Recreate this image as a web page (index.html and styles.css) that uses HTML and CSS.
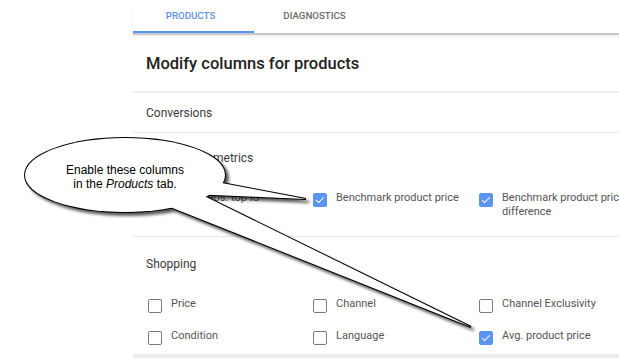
FILE: index.html
```html
<!DOCTYPE html>
<html lang="en">
<head>
    <meta charset="UTF-8">
    <title>Modify columns</title>
    <link rel="stylesheet" href="styles.css">
</head>
<body>

    <!-- Columns panel -->
    <div class="panel">
        <div class="tabs">
            <div class="tab active">Products</div>
            <div class="tab">Diagnostics</div>
        </div>

        <h1 class="title">Modify columns for products</h1>

        <div class="section collapsed">
            <p class="heading">Conversions</p>
        </div>

        <div class="section">
            <p class="heading">Competitive metrics</p>
            <div class="options">
                <label class="option"><span class="box"></span>Search abs. top IS</label>
                <label class="option"><span class="box checked"></span>Benchmark product price</label>
                <label class="option"><span class="box checked"></span>Benchmark product price difference</label>
            </div>
        </div>

        <div class="section last">
            <p class="heading">Shopping</p>
            <div class="options">
                <label class="option"><span class="box"></span>Price</label>
                <label class="option"><span class="box"></span>Channel</label>
                <label class="option"><span class="box"></span>Channel Exclusivity</label>
                <label class="option"><span class="box"></span>Condition</label>
                <label class="option"><span class="box"></span>Language</label>
                <label class="option"><span class="box checked"></span>Avg. product price</label>
            </div>
        </div>
    </div>

    <!-- Callout -->
    <svg class="callout" width="619" height="359" viewBox="0 0 619 359">
        <defs>
            <filter id="shadow" x="-10%" y="-10%" width="130%" height="140%">
                <feDropShadow dx="3" dy="3" stdDeviation="1.8" flood-color="#000" flood-opacity="0.65"/>
            </filter>
        </defs>
        <g filter="url(#shadow)">
            <g stroke="#000" stroke-width="2" fill="#fff">
                <ellipse cx="125" cy="175" rx="100" ry="37"/>
                <polygon points="306,199 190,177 190,194"/>
                <polygon points="471,327 160,203 192,190"/>
            </g>
            <g fill="#fff">
                <ellipse cx="125" cy="175" rx="100" ry="37"/>
                <polygon points="306,199 190,177 190,194"/>
                <polygon points="471,327 160,203 192,190"/>
            </g>
        </g>
    </svg>
    <div class="callout-text">Enable these columns<br>in the <i>Products</i> tab.</div>

</body>
</html>
```

FILE: styles.css
```css
/* Page */
body {
    margin: 0;
    width: 619px;
    height: 359px;
    overflow: hidden;
    position: relative;
    background: #fff;
    font-family: Roboto, "Liberation Sans", sans-serif;
}

.panel {
    margin-left: 133px;
    width: 640px;
}

/* Tabs */
.tabs {
    display: flex;
    height: 33px;
    border-bottom: 2px solid #c8c8c8;
    box-shadow: 0 2px 2px rgba(0, 0, 0, 0.06);
}

.tab {
    width: 121px;
    text-align: center;
    line-height: 31px;
    font-size: 9.7px;
    font-weight: 500;
    text-transform: uppercase;
    color: #6b6b6b;
}

.tab.active {
    color: #5b8ff0;
    box-shadow: inset 0 -2px 0 #5b8ff0;
    text-indent: -6px;
}

.title {
    margin: 0;
    height: 56px;
    line-height: 58px;
    padding-left: 13px;
    font-size: 16.5px;
    font-weight: 500;
    color: #222;
    border-bottom: 2px solid #efefef;
}

/* Sections */
.section {
    padding: 17px 0 18px 13px;
    border-bottom: 1px solid #e8e8e8;
}

.section.collapsed {
    height: 39px;
    padding: 0 0 0 13px;
}

.section.collapsed .heading {
    line-height: 40px;
}

.section.last {
    padding-top: 19px;
    padding-bottom: 0;
    height: 98px;
    border-bottom: 4px solid #eee;
}

.heading {
    margin: 0;
    font-size: 12px;
    line-height: 16px;
    color: #3a3a3a;
}

.options {
    display: grid;
    grid-template-columns: 165px 166px 166px;
    row-gap: 16px;
    margin-top: 25px;
    padding-left: 2px;
}

.option {
    display: flex;
    gap: 9px;
    font-size: 11px;
    line-height: 13.5px;
    color: #555;
}

.box {
    flex: none;
    width: 14px;
    height: 14px;
    margin-top: 2px;
    box-sizing: border-box;
    border: 1.5px solid #7a7a7a;
    border-radius: 2px;
    position: relative;
}

.box.checked {
    background: #5b94f2;
    border-color: #5b94f2;
}

.box.checked::after {
    content: "";
    position: absolute;
    left: 3.5px;
    top: 0.5px;
    width: 3px;
    height: 7px;
    border: solid #fff;
    border-width: 0 1.5px 1.5px 0;
    transform: rotate(45deg);
}

/* Callout overlay */
.callout {
    position: absolute;
    left: 0;
    top: 0;
    pointer-events: none;
}

.callout-text {
    position: absolute;
    left: 25px;
    top: 163px;
    width: 200px;
    text-align: center;
    font-family: "Liberation Sans", Arial, sans-serif;
    font-size: 12px;
    line-height: 14px;
    color: #000;
}
```
